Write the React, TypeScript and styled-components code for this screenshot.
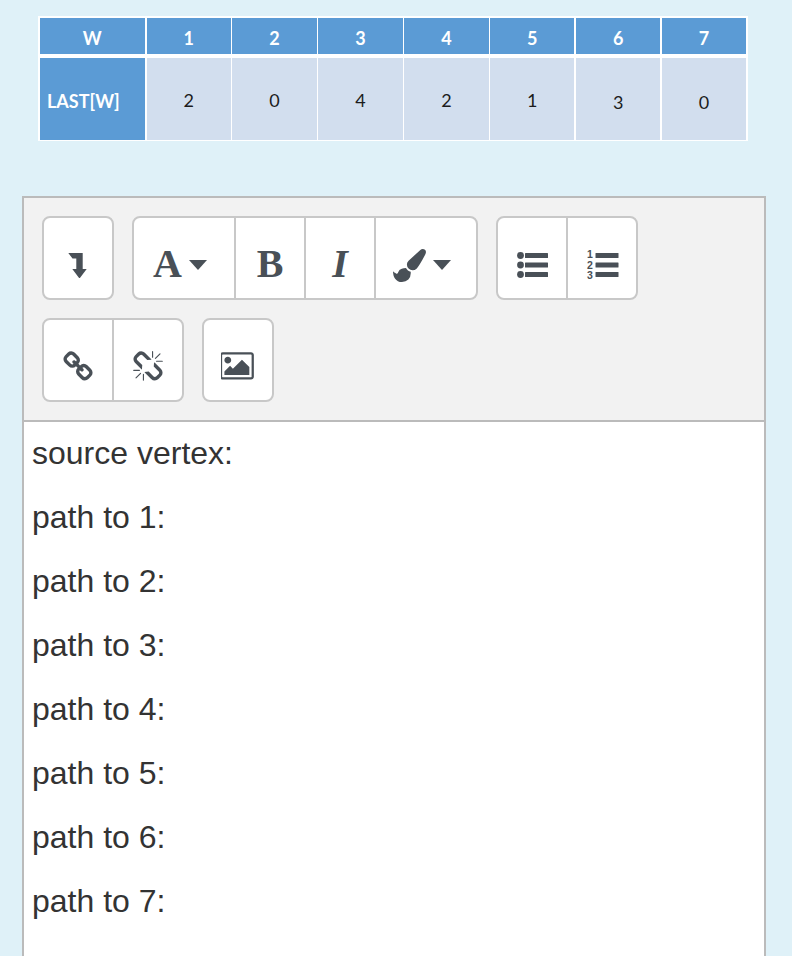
import React from "react";
import styled, { createGlobalStyle } from "styled-components";

const Global = createGlobalStyle`
  html, body { margin: 0; padding: 0; background: #dff1f8; }
  #root { height: 956px; overflow: hidden; }
`;

const Page = styled.div`
  height: 956px;
  overflow: hidden;
  background: #dff1f8;
  padding: 16px 0 0 38px;
  box-sizing: border-box;
`;

const Table = styled.div`
  display: grid;
  grid-template-columns: 105.5px repeat(7, 84.4px);
  grid-template-rows: 36px 82px;
  column-gap: 1.5px;
  row-gap: 4px;
  width: 709.8px;
  height: 125px;
  padding: 1.5px;
  background: #fff;
  box-sizing: border-box;
  font-family: "Lato", "Open Sans", sans-serif;
`;

const HeadCell = styled.div<{ $side?: boolean }>`
  display: flex;
  align-items: center;
  justify-content: ${(p) => (p.$side ? "flex-start" : "center")};
  padding: ${(p) => (p.$side ? "4px 0 0 7.5px" : "5px 0 0")};
  background: #5b9bd5;
  color: #fff;
  font-weight: 700;
  font-size: 18px;
`;

const BodyCell = styled.div<{ $low?: boolean }>`
  display: flex;
  align-items: center;
  justify-content: center;
  background: #d2deee;
  color: #1c1c1c;
  font-size: 18px;
  padding-top: ${(p) => (p.$low ? 7 : 2)}px;
  box-sizing: border-box;
`;

const Editor = styled.div`
  width: 744px;
  margin: 55px 0 0 -16px;
  border: 2px solid #bbbbbb;
  border-bottom: 0;
  background: #fff;
  box-sizing: border-box;
`;

const Toolbar = styled.div`
  background: #f2f2f2;
  border-bottom: 2px solid #bbbbbb;
  padding: 18px;
  display: flex;
  flex-direction: column;
  gap: 18px;
`;

const ToolRow = styled.div`
  display: flex;
  gap: 18px;
`;

const Group = styled.div`
  display: flex;
  height: 84px;
  box-sizing: border-box;
  border: 2px solid #c8c8c8;
  border-radius: 8px;
  background: #fff;
`;

const ToolButton = styled.div<{ $wide?: boolean; $divided?: boolean }>`
  width: ${(p) => (p.$wide ? 100 : 68) + (p.$divided ? 2 : 0)}px;
  height: 80px;
  display: flex;
  flex: none;
  align-items: center;
  justify-content: center;
  gap: 7px;
  padding: 14px ${(p) => (p.$wide ? 8 : 0)}px 0 0;
  box-sizing: border-box;
  color: #495057;
  border-left: ${(p) => (p.$divided ? "2px solid #c8c8c8" : "0")};
`;

const Glyph = styled.span<{ $italic?: boolean }>`
  font-family: "Liberation Serif", serif;
  font-weight: 700;
  font-style: ${(p) => (p.$italic ? "italic" : "normal")};
  font-size: 40px;
  line-height: 40px;
  color: #495057;
  margin-top: -3px;
`;

const Caret = styled.span`
  width: 0;
  height: 0;
  border-left: 9.5px solid transparent;
  border-right: 9.5px solid transparent;
  border-top: 10px solid #495057;
  margin-top: -1px;
`;

const Icon = styled.svg`
  display: block;
  fill: #495057;
  flex: none;
`;

const OlDigit = styled.text`
  font-family: "Liberation Sans", sans-serif;
  font-weight: 700;
  font-size: 10.5px;
  fill: #495057;
`;

const Content = styled.div`
  padding-left: 8px;
  margin-top: -1px;
  height: 600px;
  font-family: "Liberation Sans", Arial, sans-serif;
  font-size: 32px;
  color: #333333;
`;

const Line = styled.p`
  margin: 0;
  line-height: 64px;
`;

const FA = ({ size, w = 1792, d }: { size: number; w?: number; d: string }) => (
  <Icon width={size} height={size} viewBox={`0 0 ${w} ${w}`}>
    <path d={d} />
  </Icon>
);

const LINK =
  "M1520 1216q0-40-28-68l-208-208q-28-28-68-28-42 0-72 32 3 3 19 18.500t21.500 21.500 15 19 13 25.500 3.500 27.500q0 40-28 68t-68 28q-15 0-27.500-3.500t-25.500-13-19-15-21.500-21.500-18.500-19q-33 31-33 73 0 40 28 68l206 207q27 27 68 27 40 0 68-26l147-146q28-28 28-67zm-703-705q0-40-28-68l-206-207q-28-28-68-28-39 0-68 27l-147 146q-28 28-28 67 0 40 28 68l208 208q27 27 68 27 42 0 72-31-3-3-19-18.500t-21.500-21.500-15-19-13-25.500-3.500-27.500q0-40 28-68t68-28q15 0 27.500 3.500t25.500 13 19 15 21.500 21.500 18.500 19q33-31 33-73zm895 705q0 120-85 203l-147 146q-83 83-203 83-121 0-204-85l-206-207q-83-83-83-203 0-123 88-209l-88-88q-86 88-208 88-120 0-204-84l-208-208q-84-84-84-204t85-203l147-146q83-83 203-83 121 0 204 85l206 207q83 83 83 203 0 123-88 209l88 88q86-88 208-88 120 0 204 84l208 208q84 84 84 204z";
const UNLINK =
  "M503 1271l-256 256q-10 9-23 9-12 0-23-9-9-10-9-23t9-23l256-256q10-9 23-9t23 9q9 10 9 23t-9 23zm169 41v320q0 14-9 23t-23 9-23-9-9-23v-320q0-14 9-23t23-9 23 9 9 23zm-224-224q0 14-9 23t-23 9h-320q-14 0-23-9t-9-23 9-23 23-9h320q14 0 23 9t9 23zm1264 128q0 120-85 203l-147 146q-83 83-203 83-121 0-204-85l-334-335q-21-21-42-56l239-18 273 274q27 27 68 27.500t68-26.500l147-146q28-28 28-67 0-40-28-68l-274-275 18-239q35 21 56 42l336 336q84 86 84 204zm-617-724l-239 18-273-274q-28-28-68-28-39 0-68 27l-147 146q-28 28-28 67 0 40 28 68l274 274-18 240q-35-21-56-42l-336-336q-84-86-84-204 0-120 85-203l147-146q83-83 203-83 121 0 204 85l334 335q21 21 42 56zm633 84q0 14-9 23t-23 9h-320q-14 0-23-9t-9-23 9-23 23-9h320q14 0 23 9t9 23zm-544-544v320q0 14-9 23t-23 9-23-9-9-23v-320q0-14 9-23t23-9 23 9 9 23zm407 151l-256 256q-11 9-23 9t-23-9q-9-10-9-23t9-23l256-256q10-9 23-9t23 9q9 10 9 23t-9 23z";
const PICTURE =
  "M576 576q0 80-56 136t-136 56-136-56-56-136 56-136 136-56 136 56 56 136zm1024 384v448h-1408v-192l320-320 160 160 512-512zm96-704h-1600q-13 0-22.500 9.500t-9.500 22.500v1216q0 13 9.500 22.500t22.500 9.500h1600q13 0 22.500-9.500t9.500-22.500v-1216q0-13-9.500-22.500t-22.500-9.500zm160 32v1216q0 66-47 113t-113 47h-1600q-66 0-113-47t-47-113v-1216q0-66 47-113t113-47h1600q66 0 113 47t47 113z";
const BRUSH =
  "M1615 0q70 0 122.500 46.500t52.500 116.500q0 63-45 151-332 629-465 752-97 91-218 91-126 0-216.500-92.500t-90.500-219.500q0-128 92-212l638-579q59-54 130-54zm-909 1034q39 76 106.500 130t150.500 76l1 71q4 213-129.500 347t-348.500 134q-123 0-218-46.500t-152.500-127.500-86.500-183-29-220q7 5 41 30t62 44.500 59 36.500 46 17q41 0 55-37 25-66 57.500-112.500t69.500-76 88-47.500 103-25.500 125-10.500z";

const ArrowIcon = () => (
  <Icon width={32} height={32} viewBox="0 0 32 32">
    <path d="M6.300 4H20.700V20H24.700L18.300 28.500Q17.500 29.500 16.700 28.500L10.300 20H14.300V9.500H10.500Z" />
  </Icon>
);

const ListUl = () => (
  <Icon width={33} height={32} viewBox="0 0 33 32">
    <circle cx="4.500" cy="6.500" r="3.400" />
    <circle cx="4.500" cy="16" r="3.400" />
    <circle cx="4.500" cy="25.500" r="3.400" />
    <rect x="9" y="4" width="23" height="5" rx="0.500" />
    <rect x="9" y="13.500" width="23" height="5" rx="0.500" />
    <rect x="9" y="23" width="23" height="5" rx="0.500" />
  </Icon>
);

const ListOl = () => (
  <Icon width={33} height={36} viewBox="0 -2 33 36">
    <OlDigit x="1" y="9">1</OlDigit>
    <OlDigit x="1" y="19.500">2</OlDigit>
    <OlDigit x="1" y="30">3</OlDigit>
    <rect x="9.500" y="4" width="23" height="5" rx="0.500" />
    <rect x="9.500" y="13.500" width="23" height="5" rx="0.500" />
    <rect x="9.500" y="23" width="23" height="5" rx="0.500" />
  </Icon>
);

const heads = ["1", "2", "3", "4", "5", "6", "7"];
const values: { v: string; low?: boolean }[] = [
  { v: "2" },
  { v: "0" },
  { v: "4" },
  { v: "2" },
  { v: "1" },
  { v: "3", low: true },
  { v: "0", low: true },
];
const lines = [
  "source vertex:",
  "path to 1:",
  "path to 2:",
  "path to 3:",
  "path to 4:",
  "path to 5:",
  "path to 6:",
  "path to 7:",
];

export default function App() {
  return (
    <Page>
      <Global />
      <Table>
        <HeadCell>W</HeadCell>
        {heads.map((h) => (
          <HeadCell key={h}>{h}</HeadCell>
        ))}
        <HeadCell $side>LAST[W]</HeadCell>
        {values.map((c, i) => (
          <BodyCell key={i} $low={c.low}>
            {c.v}
          </BodyCell>
        ))}
      </Table>
      <Editor>
        <Toolbar>
          <ToolRow>
            <Group>
              <ToolButton>
                <ArrowIcon />
              </ToolButton>
            </Group>
            <Group>
              <ToolButton $wide>
                <Glyph>A</Glyph>
                <Caret />
              </ToolButton>
              <ToolButton $divided>
                <Glyph>B</Glyph>
              </ToolButton>
              <ToolButton $divided>
                <Glyph $italic>I</Glyph>
              </ToolButton>
              <ToolButton $divided $wide>
                <FA size={33} d={BRUSH} />
                <Caret />
              </ToolButton>
            </Group>
            <Group>
              <ToolButton>
                <ListUl />
              </ToolButton>
              <ToolButton $divided>
                <ListOl />
              </ToolButton>
            </Group>
          </ToolRow>
          <ToolRow>
            <Group>
              <ToolButton>
                <FA size={32} d={LINK} />
              </ToolButton>
              <ToolButton $divided>
                <FA size={32} d={UNLINK} />
              </ToolButton>
            </Group>
            <Group>
              <ToolButton>
                <FA size={34} w={1920} d={PICTURE} />
              </ToolButton>
            </Group>
          </ToolRow>
        </Toolbar>
        <Content>
          {lines.map((l) => (
            <Line key={l}>{l}</Line>
          ))}
        </Content>
      </Editor>
    </Page>
  );
}
